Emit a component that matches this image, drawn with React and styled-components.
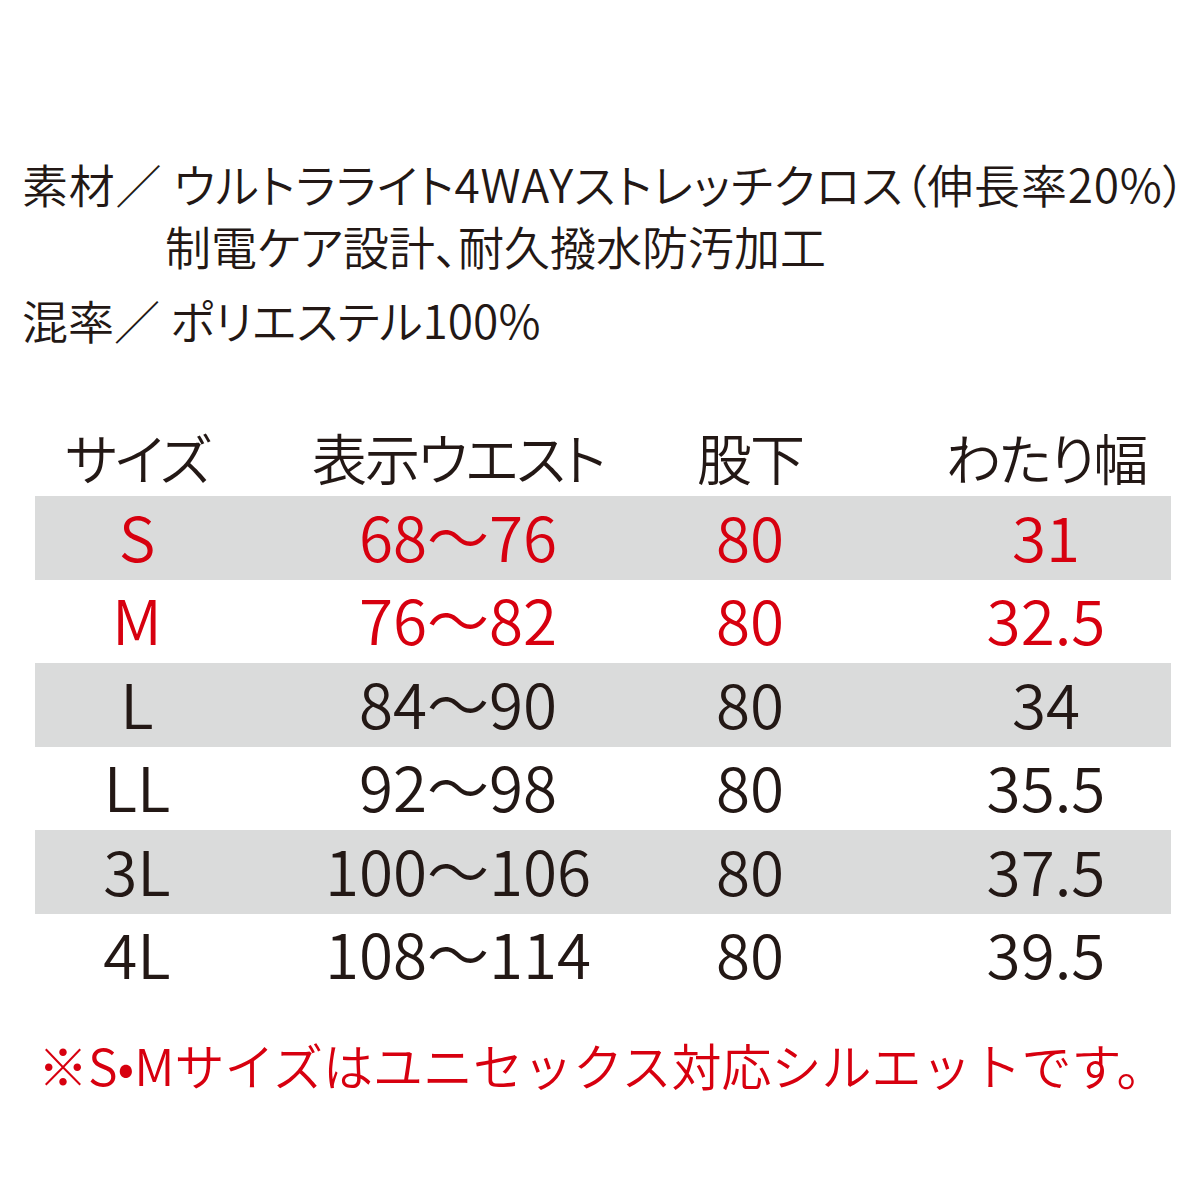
import React from 'react'
import styled, { createGlobalStyle } from 'styled-components'

const GlobalStyle = createGlobalStyle`
  html, body {
    margin: 0;
    padding: 0;
    background: #ffffff;
  }
  body {
    font-family: "Noto Sans CJK JP", "Noto Sans", sans-serif;
    font-weight: 350;
    color: #231815;
  }
`

const Page = styled.div`
  width: 1199px;
  height: 1199px;
  box-sizing: border-box;
  padding-top: 152px;
  display: flex;
  flex-direction: column;
`

const Spec = styled.div`
  padding-left: 22px;
  display: flex;
  flex-direction: column;
`

const SpecLine = styled.div`
  font-size: 46px;
  line-height: 62px;
  white-space: nowrap;
  font-feature-settings: "palt";
  letter-spacing: ${p => p.track || 0}px;
  padding-left: ${p => p.indent || 0}px;
  margin-top: ${p => p.gap || 0}px;
`

const Table = styled.div`
  margin: 67px 28px 0 35px;
  display: flex;
  flex-direction: column;
`

const Row = styled.div`
  display: grid;
  grid-template-columns: 204px 438px 146px 348px;
  align-items: center;
  height: ${p => (p.head ? 79 : 83.5)}px;
  background: ${p => (p.shade ? '#dadbdb' : 'transparent')};
  color: ${p => (p.red ? '#d7000f' : '#231815')};
`

const Cell = styled.div`
  text-align: center;
  font-size: ${p => (p.head ? 55 : 62)}px;
  line-height: 1;
  letter-spacing: ${p => (p.head ? -2 : 0)}px;
  font-feature-settings: ${p => (p.head ? '"palt"' : 'normal')};
  white-space: nowrap;
  padding-left: ${p => p.shift || 0}px;
  padding-bottom: ${p => (p.head ? 0 : 6)}px;
`

const Note = styled.div`
  margin-top: 37px;
  padding-left: 38px;
  font-size: 50px;
  line-height: 60px;
  color: #d7000f;
  white-space: nowrap;
`

const rows = [
  ['S', '68〜76', '80', '31', true],
  ['M', '76〜82', '80', '32.5', true],
  ['L', '84〜90', '80', '34', false],
  ['LL', '92〜98', '80', '35.5', false],
  ['3L', '100〜106', '80', '37.5', false],
  ['4L', '108〜114', '80', '39.5', false],
]

const App = () => (
  <Page>
    <GlobalStyle />
    <Spec>
      <SpecLine track={0.8}>素材／ ウルトラライト4WAYストレッチクロス（伸長率20%）</SpecLine>
      <SpecLine indent={143}>制電ケア設計、耐久撥水防汚加工</SpecLine>
      <SpecLine gap={12}>混率／ ポリエステル100%</SpecLine>
    </Spec>
    <Table>
      <Row head>
        <Cell head>サイズ</Cell>
        <Cell head>表示ウエスト</Cell>
        <Cell head>股下</Cell>
        <Cell head shift={98}>わたり幅</Cell>
      </Row>
      {rows.map(([size, waist, inseam, thigh, red], i) => (
        <Row key={size} shade={i % 2 === 0} red={red}>
          <Cell>{size}</Cell>
          <Cell>{waist}</Cell>
          <Cell>{inseam}</Cell>
          <Cell shift={98}>{thigh}</Cell>
        </Row>
      ))}
    </Table>
    <Note>※S•Mサイズはユニセックス対応シルエットです。</Note>
  </Page>
)

export default App
